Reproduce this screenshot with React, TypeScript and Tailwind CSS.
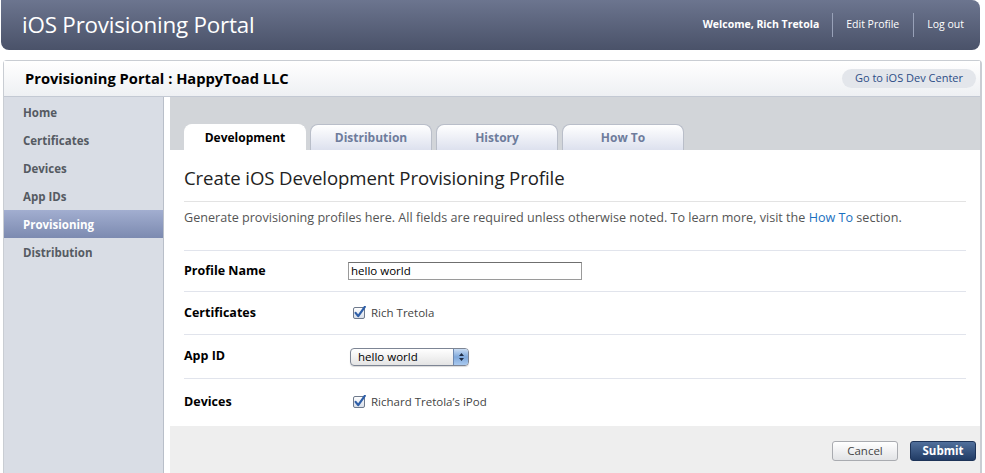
import React from "react";

const NAV = ["Home", "Certificates", "Devices", "App IDs", "Provisioning", "Distribution"];
const TABS = ["Development", "Distribution", "History", "How To"];

function Check() {
  return (
    <svg width="14" height="14" viewBox="0 0 14 14" className="shrink-0">
      <defs>
        <linearGradient id="cb" x1="0" y1="0" x2="0" y2="1">
          <stop offset="0" stopColor="#ffffff" />
          <stop offset="1" stopColor="#d6dde8" />
        </linearGradient>
      </defs>
      <rect x="0.5" y="1.5" width="11" height="11" rx="1.5" fill="url(#cb)" stroke="#6f7a8c" />
      <path d="M2.6 6.8 L5.2 10.2 L11.8 0.8" fill="none" stroke="#2f5fa8" strokeWidth="2.2" strokeLinecap="round" strokeLinejoin="round" />
    </svg>
  );
}

function Row({ label, children, h }: { label: string; children: React.ReactNode; h: string }) {
  return (
    <div className={`flex items-center mx-[14px] ${h}`}>
      <div className="w-[164px] text-[12.5px] font-bold text-black">{label}</div>
      {children}
    </div>
  );
}

export default function App() {
  return (
    <div className="w-[985px] h-[473px] bg-white overflow-hidden font-['Open_Sans',sans-serif] text-[#333]">
      {/* top bar */}
      <div className="ml-[1px] w-[979px] h-[50px] rounded-b-[8px] rounded-tr-[8px] bg-gradient-to-b from-[#6c758f] to-[#4a5269] flex items-center pl-[21px] pr-[16px]">
        <div className="text-white text-[22.4px] tracking-[-0.2px] leading-none">iOS Provisioning Portal</div>
        <div className="ml-auto flex items-center text-[10.5px] text-white">
          <span className="font-bold">Welcome, Rich Tretola</span>
          <span className="mx-[13px] w-px h-[24px] bg-[#98a1b8]" />
          <span>Edit Profile</span>
          <span className="ml-[14px] mr-[13px] w-px h-[24px] bg-[#98a1b8]" />
          <span>Log out</span>
        </div>
      </div>

      {/* main box */}
      <div className="mt-[10px] ml-[3px] w-[979px] h-[420px] border border-[#c9cdd3] border-r-[2px] rounded-t-[4px] flex flex-col">
        <div className="h-[36px] shrink-0 bg-gradient-to-b from-white to-[#eef0f3] border-b border-[#c3c9d3] flex items-center pl-[21px] pr-[4px]">
          <div className="text-[14.7px] font-bold text-black">Provisioning Portal : HappyToad LLC</div>
          <div className="ml-auto h-[19px] px-[13px] rounded-full bg-[#e3e6eb] text-[11px] text-[#2c4d87] flex items-center">Go to iOS Dev Center</div>
        </div>

        <div className="flex flex-1 min-h-0">
          {/* sidebar */}
          <div className="w-[160px] shrink-0 bg-[#d9dde5] border-r border-[#b9bfc9] pt-[1px]">
            {NAV.map((n) => (
              <div
                key={n}
                className={`h-[28px] flex items-center px-[19px] pt-[2px] text-[11.5px] font-bold ${
                  n === "Provisioning"
                    ? "bg-gradient-to-b from-[#a2aed0] to-[#7c8ab0] text-white"
                    : "text-[#555a62]"
                }`}
              >
                {n}
              </div>
            ))}
          </div>

          {/* content */}
          <div className="flex-1 pl-[6px] flex flex-col">
            <div className="h-[53px] shrink-0 bg-[#d2d5d9] flex items-end pl-[14px] gap-[4px]">
              {TABS.map((t, i) => (
                <div
                  key={t}
                  className={`h-[26px] w-[122px] rounded-t-[8px] border border-b-0 flex items-center justify-center text-[12px] font-bold ${
                    i === 0
                      ? "bg-white border-white text-black"
                      : "bg-gradient-to-b from-white to-[#dde1ee] border-[#b9bec9] text-[#6e7c9c]"
                  }`}
                >
                  {t}
                </div>
              ))}
            </div>

            <div className="h-[276px] shrink-0 bg-white">
              <div className="mx-[14px] h-[52px] border-b border-[#e3e3e3] flex items-center pt-[4px]">
                <div className="text-[18.6px] text-[#222] tracking-[-0.1px]">Create iOS Development Provisioning Profile</div>
              </div>
              <div className="mx-[14px] h-[49px] border-b border-[#e1e4ec] flex items-center pb-[15px] text-[12.6px] text-[#555]">
                <span>
                  Generate provisioning profiles here. All fields are required unless otherwise noted. To learn more, visit the{" "}
                  <span className="text-[#1a6fc0]">How To</span> section.
                </span>
              </div>
              <div className="h-[41px] mx-[14px] border-b border-[#e1e4ec] flex items-center">
                <div className="w-[164px] text-[12.5px] font-bold text-black">Profile Name</div>
                <div className="w-[234px] h-[18px] border border-[#9a9a9a] border-t-[#6f6f6f] flex items-center px-[2px] text-[11.5px] text-black">hello world</div>
              </div>
              <Row label="Certificates" h="h-[43px] border-b border-[#e1e4ec]">
                <div className="flex items-center gap-[4px] pl-[5px] text-[11.5px] text-[#444]">
                  <Check />
                  <span>Rich Tretola</span>
                </div>
              </Row>
              <Row label="App ID" h="h-[44px] border-b border-[#e1e4ec]">
                <div className="ml-[2px] w-[119px] h-[18px] rounded-[4px] border border-[#7d8594] bg-gradient-to-b from-white to-[#e4e4e4] flex items-center text-[11.5px] text-black overflow-hidden shadow-[0_1px_1px_rgba(0,0,0,0.15)]">
                  <span className="flex-1 pl-[7px]">hello world</span>
                  <span className="w-[15px] h-full bg-gradient-to-b from-[#c9dcf3] via-[#7fa8db] to-[#a9c9ef] border-l border-[#6d88b0] flex items-center justify-center">
                    <svg width="7" height="10" viewBox="0 0 7 10">
                      <path d="M3.5 1 L6 4 H1 Z M3.5 9 L6 6 H1 Z" fill="#1d2b44" />
                    </svg>
                  </span>
                </div>
              </Row>
              <Row label="Devices" h="h-[46px]">
                <div className="flex items-center gap-[4px] pl-[5px] text-[11.5px] text-[#444]">
                  <Check />
                  <span>Richard Tretola’s iPod</span>
                </div>
              </Row>
            </div>

            <div className="flex-1 bg-[#eeeeee] flex items-start justify-end gap-[12px] pr-[4px] pt-[15px]">
              <div className="w-[66px] h-[20px] rounded-[3px] border border-[#a9abb0] bg-gradient-to-b from-white to-[#e2e3e6] flex items-center justify-center text-[11.5px] text-[#444]">Cancel</div>
              <div className="w-[66px] h-[20px] rounded-[3px] border border-[#1d3358] bg-gradient-to-b from-[#51709c] to-[#223c65] flex items-center justify-center text-[11.5px] font-bold text-white">Submit</div>
            </div>
          </div>
        </div>
      </div>
    </div>
  );
}
